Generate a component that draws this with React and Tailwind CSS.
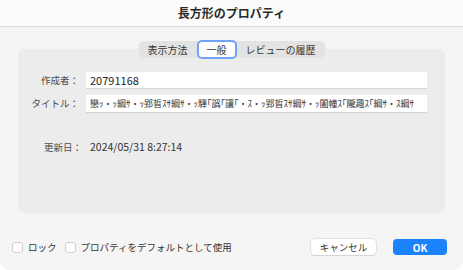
export default function App() {
  const font = { fontFamily: '"Noto Sans CJK JP", "Noto Sans", sans-serif' };
  const mojibake =
    "戀ｯ・ｯ綱ｻ・ｯ郢晢ｽｻ綱ｻ・ｯ驛｢譌｢讓｢・ｽ・ｯ郢晢ｽｻ綱ｻ・ｯ闔幢ｽ｢隴趣ｽ｢綱ｻ・ｽ綱ｻ";

  return (
    <div className="w-[463px] h-[270px] bg-[#f5f5f5] flex flex-col overflow-hidden rounded-b-[10px] text-[#262626]" style={font}>
      {/* title bar */}
      <div className="h-[27px] shrink-0 flex items-center justify-center bg-[#fbfbfb] border-b border-[#dcdcdc]">
        <span className="text-[12px] font-bold text-[#2a2a2a]">長方形のプロパティ</span>
      </div>

      {/* tab area */}
      <div className="relative mx-[18px] mt-[22px] h-[164px] rounded-[6px] bg-[#ececec]">
        <div className="absolute left-1/2 -translate-x-1/2 -top-[8px] flex items-center h-[17px] rounded-[5px] bg-[#e3e3e3] text-[10px] text-[#333]">
          <div className="px-[9px]">表示方法</div>
          <div className="h-[19px] flex items-center px-[8px] rounded-[5px] bg-white border-[2.5px] border-[#6fa3f5]">一般</div>
          <div className="px-[9px]">レビューの履歴</div>
        </div>

        <div className="flex flex-col pt-[23px] pl-[6px] pr-[18px] text-[9.5px]">
          <div className="flex items-center gap-[7px]">
            <span className="w-[55px] text-right whitespace-nowrap text-[#4a4a4a]">作成者：</span>
            <div className="flex-1 h-[16px] bg-white shadow-[0_1px_0_#d4d4d4] flex items-center px-[4px] text-[11px] text-[#222]">20791168</div>
          </div>
          <div className="flex items-center gap-[7px] mt-[7px]">
            <span className="w-[55px] text-right whitespace-nowrap text-[#4a4a4a]">タイトル：</span>
            <div className="flex-1 h-[17px] bg-white shadow-[0_1px_0_#d4d4d4] flex items-center px-[4px] text-[9px] text-[#333] whitespace-nowrap overflow-hidden">{mojibake}</div>
          </div>
          <div className="flex items-center gap-[8px] mt-[27px] pl-[20px]">
            <span className="text-[#4a4a4a]">更新日：</span>
            <span className="text-[10.5px] text-[#333]">2024/05/31 8:27:14</span>
          </div>
        </div>
      </div>

      {/* footer */}
      <div className="flex items-center mt-[26px] pl-[12px] pr-[16px] text-[9.5px] text-[#333]">
        <div className="w-[11px] h-[11px] rounded-[3px] bg-white border border-[#cfcfcf]" />
        <span className="ml-[5px]">ロック</span>
        <div className="ml-[8px] w-[11px] h-[11px] rounded-[3px] bg-white border border-[#cfcfcf]" />
        <span className="ml-[5px]">プロパティをデフォルトとして使用</span>
        <div className="ml-auto w-[65px] h-[16px] rounded-[4px] bg-white shadow-[0_0_0_0.5px_#cfcfcf,0_1px_1px_#d8d8d8] flex items-center justify-center">キャンセル</div>
        <div className="ml-[17px] w-[54px] h-[16px] rounded-[4px] bg-[#1a82fb] text-white font-bold text-[10px] flex items-center justify-center">OK</div>
      </div>
    </div>
  );
}
